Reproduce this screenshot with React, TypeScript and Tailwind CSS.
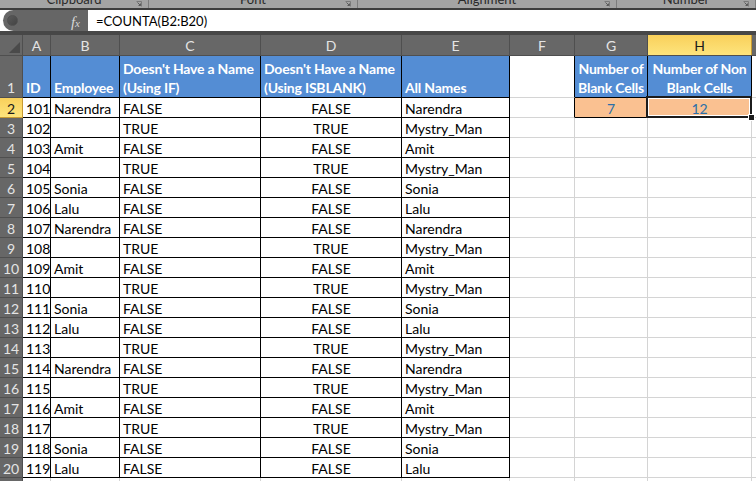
import React from "react";

const names = [
  "Narendra", "", "Amit", "", "Sonia", "Lalu", "Narendra", "", "Amit", "",
  "Sonia", "Lalu", "", "Narendra", "", "Amit", "", "Sonia", "Lalu",
];

function Launcher() {
  return (
    <svg width="6" height="6" viewBox="0 0 6 6" className="shrink-0">
      <path d="M0.5 0.5 H5.5 V5.5" fill="none" stroke="#7a7a7a" strokeWidth="1" />
      <path d="M1.5 1.5 L4.5 4.5 M2.5 4.5 H4.5 V2.5" fill="none" stroke="#5a5a5a" strokeWidth="1" />
    </svg>
  );
}

function Group({ label, cls }: { label: string; cls: string }) {
  return (
    <div className={`${cls} h-full flex items-start border-r border-[#7d7d7d] relative`}>
      <div className="flex-1 text-center leading-[13px] -mt-[7px] whitespace-nowrap">{label}</div>
      <div className="absolute right-[6px] top-[1px]">
        <Launcher />
      </div>
    </div>
  );
}

function ColHead({ label, cls, active }: { label: string; cls: string; active?: boolean }) {
  return (
    <div
      className={
        active
          ? `${cls} h-full flex items-center justify-center border-r border-[#c79a32] bg-gradient-to-b from-[#f9d05a] to-[#fde47c] text-[#1b1b1b]`
          : `${cls} h-full flex items-center justify-center border-r border-[#4f4f4f] text-[#e4e4e4]`
      }
    >
      {label}
    </div>
  );
}

function RowHead({ n }: { n: number }) {
  const active = n === 2;
  return (
    <div
      className={
        active
          ? "w-[23px] shrink-0 h-full flex items-end justify-center border-r border-b border-[#c79a32] bg-gradient-to-b from-[#f9d05a] to-[#fde47c] text-[#1b1b1b] leading-[17px]"
          : "w-[23px] shrink-0 h-full flex items-end justify-center border-r border-b border-[#4f4f4f] bg-[#676767] text-[#e4e4e4] leading-[17px]"
      }
    >
      {n}
    </div>
  );
}

const K = "border-r border-b border-black";
const G = "border-r border-b border-[#d4d4d4]";

function DataRow({ i }: { i: number }) {
  const id = 101 + i;
  const name = names[i];
  const blank = name === "";
  const n = i + 2;
  const first = n === 2;
  return (
    <div className="flex h-[20px] shrink-0 leading-[16px]">
      <RowHead n={n} />
      <div className={`w-[28px] shrink-0 ${K} flex items-end pl-[3px]`}>{id}</div>
      <div className={`w-[69px] shrink-0 ${K} flex items-end pl-[3px]`}>{name}</div>
      <div className={`w-[141px] shrink-0 ${K} flex items-end pl-[3px]`}>{blank ? "TRUE" : "FALSE"}</div>
      <div className={`w-[141px] shrink-0 ${K} flex items-end justify-center`}>{blank ? "TRUE" : "FALSE"}</div>
      <div className={`w-[108px] shrink-0 ${K} flex items-end pl-[3px]`}>{blank ? "Mystry_Man" : name}</div>
      {first ? (
        <>
          <div className="w-[65px] shrink-0 border-r border-b border-r-black border-b-[#d4d4d4]" />
          <div className={`w-[73px] shrink-0 ${K} bg-[#fac191] flex items-end justify-center text-[#2b6fa8]`}>7</div>
          <div className={`w-[104px] shrink-0 ${K} bg-[#fac191] flex items-end justify-center text-[#2b6fa8] relative`}>
            12
            <div className="absolute -left-[2px] -top-[2px] -right-[1px] -bottom-[1px] border-2 border-[#1c1c1c]">
              <div className="w-full h-full border border-white" />
            </div>
            <div className="absolute -right-[4px] -bottom-[4px] w-[7px] h-[7px] bg-[#1c1c1c] border border-white" />
          </div>
        </>
      ) : (
        <>
          <div className={`w-[65px] shrink-0 ${G}`} />
          <div className={`w-[73px] shrink-0 ${G}`} />
          <div className={`w-[104px] shrink-0 ${G}`} />
        </>
      )}
      <div className={`w-[40px] shrink-0 ${G}`} />
    </div>
  );
}

export default function App() {
  return (
    <div
      className="w-[756px] h-[481px] overflow-hidden bg-white flex flex-col text-[14px] text-black"
      style={{ fontFamily: "Lato, 'Noto Sans', sans-serif" }}
    >
      {/* ribbon group labels (cut off at the top, as in the screenshot) */}
      <div className="h-[8px] shrink-0 bg-[#a4a4a4] flex overflow-hidden text-[13px] text-[#2a2a2a]">
        <Group label="Clipboard" cls="w-[149px] shrink-0" />
        <Group label="Font" cls="w-[209px] shrink-0" />
        <Group label="Alignment" cls="w-[259px] shrink-0" />
        <Group label="Number" cls="w-[139px] shrink-0" />
      </div>
      <div className="h-[2px] shrink-0 bg-[#3e3e3e]" />

      {/* formula bar */}
      <div className="h-[21px] shrink-0 flex bg-white">
        <div className="w-[85px] ml-[3px] shrink-0 bg-[#666666] rounded-l-[11px] flex items-center relative">
          <div className="ml-[4px] w-[11px] h-[11px] rounded-full bg-gradient-to-br from-[#5a5a5a] to-[#444] border border-[#505050]" />
          <div
            className="absolute right-[8px] top-[1px] text-[15px] italic text-[#d8d8d8]"
            style={{ fontFamily: "'Liberation Serif', serif" }}
          >
            f<span className="text-[11px]">x</span>
          </div>
        </div>
        <div className="flex-1 flex items-center pl-[8px] text-[13px] leading-[18px]">=COUNTA(B2:B20)</div>
      </div>
      <div className="h-[4px] shrink-0 bg-[#474747]" />

      {/* column headers */}
      <div className="h-[21px] shrink-0 flex bg-[#676767] border-b border-[#4f4f4f]">
        <div className="w-[23px] shrink-0 h-full border-r border-[#4f4f4f] relative">
          <svg className="absolute right-[2px] bottom-[2px]" width="11" height="11" viewBox="0 0 11 11">
            <path d="M11 0 L11 11 L0 11 Z" fill="#4a4a4a" />
          </svg>
        </div>
        <ColHead label="A" cls="w-[28px] shrink-0" />
        <ColHead label="B" cls="w-[69px] shrink-0" />
        <ColHead label="C" cls="w-[141px] shrink-0" />
        <ColHead label="D" cls="w-[141px] shrink-0" />
        <ColHead label="E" cls="w-[108px] shrink-0" />
        <ColHead label="F" cls="w-[65px] shrink-0" />
        <ColHead label="G" cls="w-[73px] shrink-0" />
        <ColHead label="H" cls="w-[104px] shrink-0" active />
        <ColHead label="I" cls="w-[40px] shrink-0" />
      </div>

      {/* row 1 */}
      <div className="flex h-[42px] shrink-0 font-bold text-white leading-[19px] tracking-[-0.2px]">
        <div className="w-[23px] shrink-0 h-full flex items-end justify-center border-r border-b border-[#4f4f4f] bg-[#676767] text-[#e4e4e4] font-normal leading-[18px] tracking-normal">
          1
        </div>
        <div className={`w-[28px] shrink-0 ${K} bg-[#548dd4] flex items-end pl-[3px]`}>ID</div>
        <div className={`w-[69px] shrink-0 ${K} bg-[#548dd4] flex items-end pl-[3px]`}>Employee</div>
        <div className={`w-[141px] shrink-0 ${K} bg-[#548dd4] flex items-end pl-[3px] whitespace-nowrap`}>
          <div>
            Doesn't Have a Name
            <br />
            (Using IF)
          </div>
        </div>
        <div className={`w-[141px] shrink-0 ${K} bg-[#548dd4] flex items-end pl-[3px] whitespace-nowrap`}>
          <div>
            Doesn't Have a Name
            <br />
            (Using ISBLANK)
          </div>
        </div>
        <div className={`w-[108px] shrink-0 ${K} bg-[#548dd4] flex items-end pl-[3px]`}>All Names</div>
        <div className="w-[65px] shrink-0 border-r border-b border-r-black border-b-[#d4d4d4]" />
        <div className={`w-[73px] shrink-0 ${K} bg-[#548dd4] flex items-end justify-center text-center whitespace-nowrap`}>
          <div>
            Number of
            <br />
            Blank Cells
          </div>
        </div>
        <div className={`w-[104px] shrink-0 ${K} bg-[#548dd4] flex items-end justify-center text-center whitespace-nowrap`}>
          <div>
            Number of Non
            <br />
            Blank Cells
          </div>
        </div>
        <div className={`w-[40px] shrink-0 ${G}`} />
      </div>

      {names.map((_, i) => (
        <DataRow key={i} i={i} />
      ))}

      {/* partial row 21 */}
      <div className="flex h-[20px] shrink-0 leading-[16px]">
        <RowHead n={21} />
        <div className={`w-[28px] shrink-0 ${G}`} />
        <div className={`w-[69px] shrink-0 ${G}`} />
        <div className={`w-[141px] shrink-0 ${G}`} />
        <div className={`w-[141px] shrink-0 ${G}`} />
        <div className={`w-[108px] shrink-0 ${G}`} />
        <div className={`w-[65px] shrink-0 ${G}`} />
        <div className={`w-[73px] shrink-0 ${G}`} />
        <div className={`w-[104px] shrink-0 ${G}`} />
        <div className={`w-[40px] shrink-0 ${G}`} />
      </div>
    </div>
  );
}
